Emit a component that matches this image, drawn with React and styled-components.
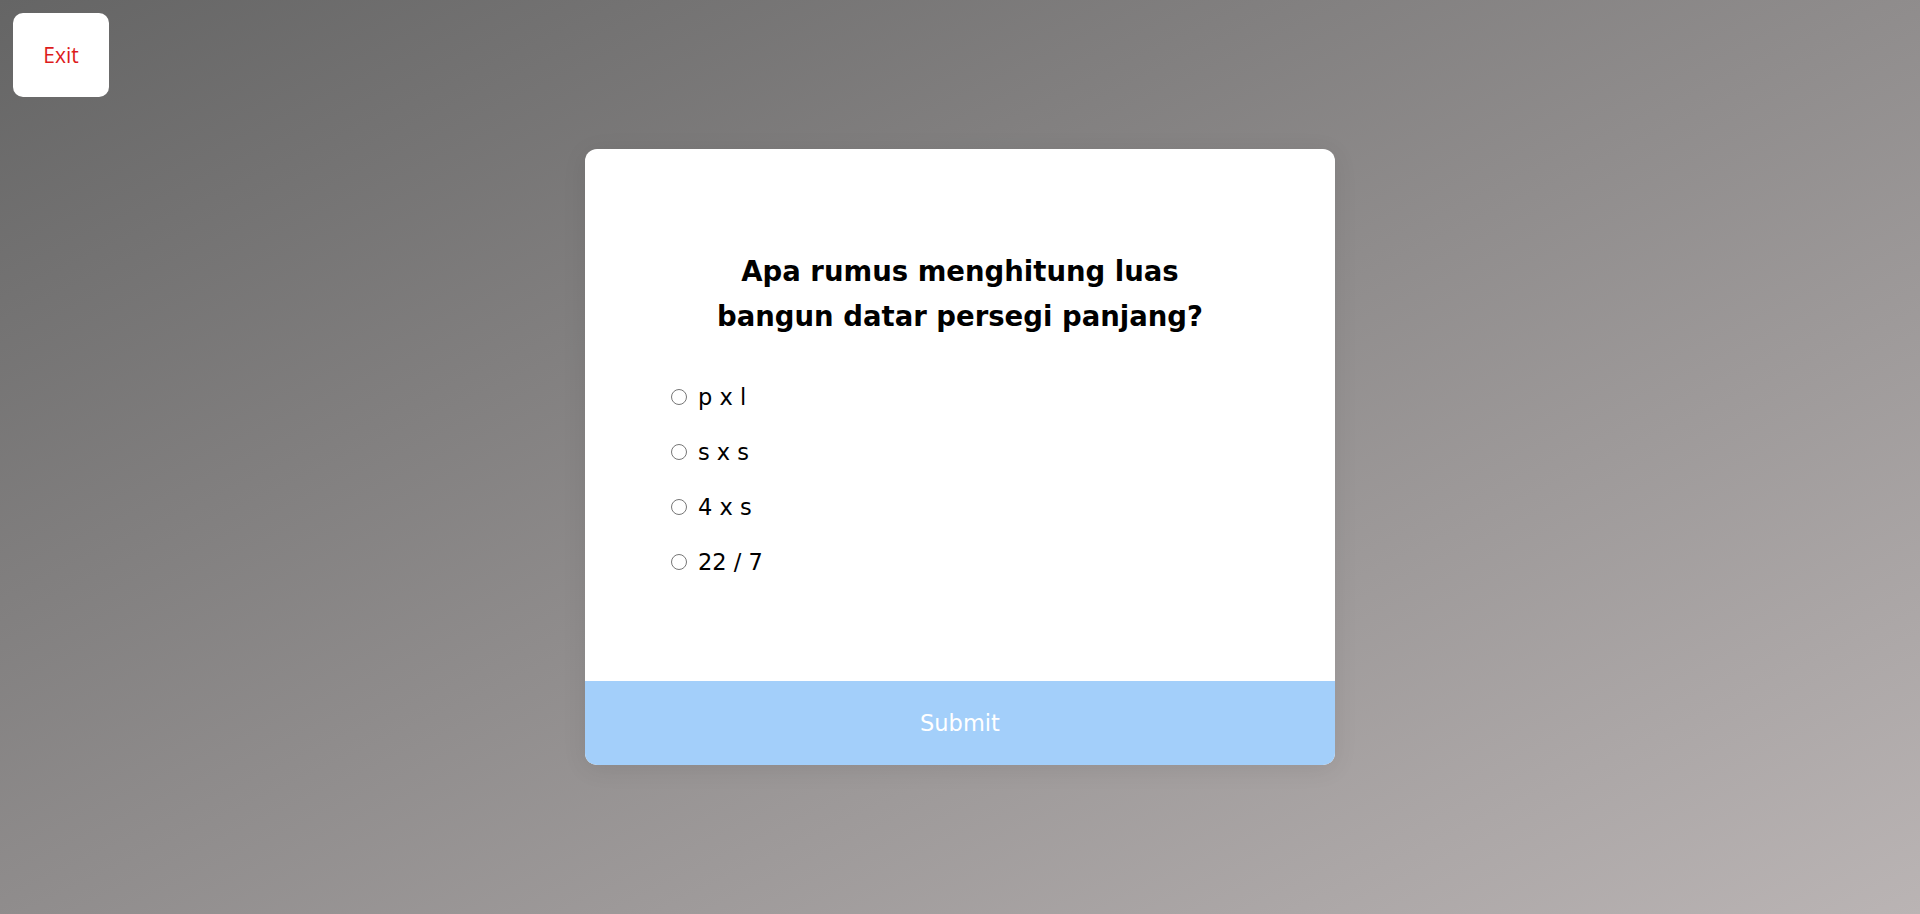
import React from "react";
import styled, { createGlobalStyle } from "styled-components";

const Global = createGlobalStyle`
  html, body { margin: 0; padding: 0; }
  body {
    min-height: 914px;
    background: linear-gradient(to bottom right, #656565, #bab4b4);
    font-family: "Open Sans", "Liberation Sans", sans-serif;
  }
`;

const Page = styled.div`
  position: relative;
  height: 914px;
  display: flex;
  align-items: center;
  justify-content: center;
`;

const ExitButton = styled.button`
  position: absolute;
  top: 13px;
  left: 13px;
  width: 96px;
  height: 84px;
  border: none;
  border-radius: 10px;
  background: #ffffff;
  color: #dd1c1c;
  font-family: "Open Sans", "Liberation Sans", sans-serif;
  font-size: 21px;
  cursor: pointer;
`;

const Card = styled.div`
  width: 750px;
  background: #ffffff;
  border-radius: 12px;
  overflow: hidden;
  display: flex;
  flex-direction: column;
  box-shadow: 0 4px 24px rgba(0, 0, 0, 0.08);
`;

const Body = styled.div`
  padding: 100px 86px 101px;
  display: flex;
  flex-direction: column;
`;

const Title = styled.h2`
  margin: 0 0 40px;
  text-align: center;
  font-family: "DejaVu Sans", "Open Sans", sans-serif;
  font-weight: 700;
  font-size: 27.5px;
  line-height: 45px;
  color: #000;
`;

const Options = styled.div`
  display: flex;
  flex-direction: column;
  gap: 19px;
`;

const Option = styled.label`
  display: flex;
  align-items: center;
  gap: 11px;
  height: 36px;
  font-family: "DejaVu Sans", "Open Sans", sans-serif;
  font-size: 22.5px;
  color: #000;
  cursor: pointer;
`;

const Radio = styled.input`
  margin: 0;
  width: 16px;
  height: 16px;
`;

const Submit = styled.button`
  height: 84px;
  border: none;
  background: #a3cffa;
  color: #ffffff;
  font-family: "DejaVu Sans", "Open Sans", sans-serif;
  font-size: 22.5px;
  cursor: pointer;
`;

const options = ["p x l", "s x s", "4 x s", "22 / 7"];

export default function App() {
  return (
    <>
      <Global />
      <Page>
        <ExitButton>Exit</ExitButton>
        <Card>
          <Body>
            <Title>
              Apa rumus menghitung luas
              <br />
              bangun datar persegi panjang?
            </Title>
            <Options>
              {options.map((o) => (
                <Option key={o}>
                  <Radio type="radio" name="answer" value={o} />
                  {o}
                </Option>
              ))}
            </Options>
          </Body>
          <Submit>Submit</Submit>
        </Card>
      </Page>
    </>
  );
}
